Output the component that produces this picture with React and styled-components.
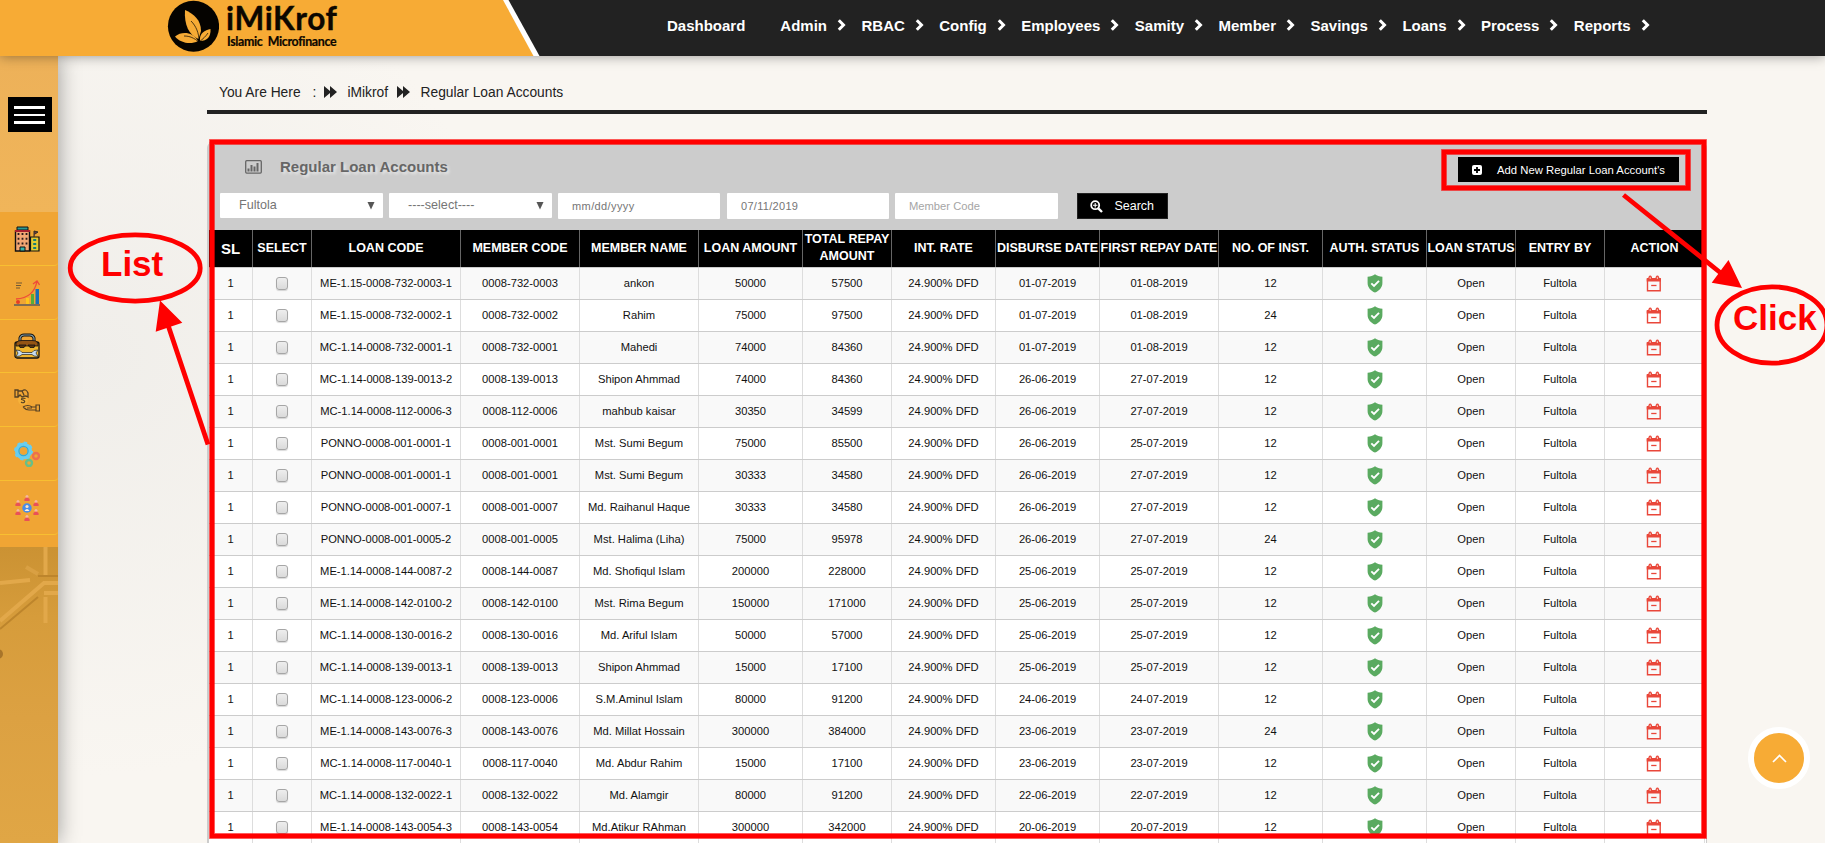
import React from "react";
import styled, { createGlobalStyle } from "styled-components";

const Global = createGlobalStyle`
  * { box-sizing: border-box; }
  html, body { margin: 0; padding: 0; }
  body {
    height: 843px;
    overflow: hidden;
    font-family: "Liberation Sans", Arial, sans-serif;
    color: #222;
    background: #f9f6f1;
  }
`;

const Page = styled.div`
  position: relative;
  width: 1825px;
  height: 843px;
  overflow: hidden;
  display: flex;
  flex-direction: column;
`;

const Header = styled.header`
  position: relative;
  z-index: 2;
  flex: none;
  height: 56px;
  display: flex;
  background: #222;
  box-shadow: 0 0 12px rgba(0, 0, 0, 0.4);
`;

const BrandEdge = styled.div`
  width: 540px;
  height: 56px;
  background: #fff;
  clip-path: polygon(0 0, 508.5px 0, 539.5px 100%, 0 100%);
`;

const Brand = styled.div`
  height: 56px;
  padding-left: 167px;
  display: flex;
  background: #f7ab35;
  clip-path: polygon(0 0, 503px 0, 533.5px 100%, 0 100%);
`;

const BrandText = styled.div`
  font-family: Lato, "Open Sans", sans-serif;
  font-weight: 700;
  color: #0c0700;
  padding-left: 7px;
  white-space: pre;
`;

const BrandName = styled.div`
  font-size: 31.5px;
  line-height: 34px;
  padding-top: 1px;
  letter-spacing: 0.65px;
  -webkit-text-stroke: 0.4px #0c0700;
`;

const BrandTag = styled.div`
  font-size: 12.4px;
  line-height: 14px;
  letter-spacing: -0.34px;
  padding-left: 1px;
  -webkit-text-stroke: 0.2px #0c0700;
`;

const Nav = styled.nav`
  display: flex;
  align-items: center;
  height: 50px;
  margin-left: 127px;
  color: #fff;
  font-size: 15px;
  font-weight: 700;
`;

const NavItem = styled.span`
  display: flex;
  align-items: center;
  margin-right: ${(p) => (p.$wide ? 35 : 15.45)}px;
  svg { margin-left: 10px; margin-top: -1px; }
`;

const Body = styled.div`
  display: flex;
  flex: 1;
  min-height: 0;
`;

const Sidebar = styled.aside`
  position: relative;
  z-index: 1;
  flex: none;
  width: 58px;
  display: flex;
  flex-direction: column;
  background: linear-gradient(#edb159, #f0b55a 160px);
  box-shadow: 0 0 22px rgba(0, 0, 0, 0.38);
`;

const MenuButton = styled.div`
  width: 44px;
  height: 35px;
  margin: 41px 0 80px 8px;
  padding: 9px 7px 8px 6px;
  display: flex;
  flex-direction: column;
  justify-content: space-between;
  background: #000;
`;

const MenuBar = styled.i`
  height: ${(p) => p.$h || 3}px;
  background: #fff;
`;

const ShortcutList = styled.div`
  height: 335px;
  background: #f0a534;
`;

const Shortcut = styled.div`
  height: ${(p) => p.$h || 54}px;
  padding: 0 4px 0 0;
  display: flex;
  align-items: center;
  justify-content: center;
  border-bottom: 1px solid #f8bf31;
  border-bottom-right-radius: 4px;
`;

const Texture = styled.div`
  flex: 1;
  background: linear-gradient(#cb9233, #d69c3b 70px, #dca142 170px, #e0a645);
`;

const Main = styled.main`
  flex: 1;
  padding: 21px 118px 0 149px;
  background: radial-gradient(ellipse 420px 420px at 40px 300px, #f0eeea, #f9f6f1);
`;

const Crumbs = styled.div`
  height: 37px;
  padding: 8px 0 0 12px;
  border-bottom: 4px solid #222;
  display: flex;
  font-size: 13.8px;
  line-height: 16px;
  color: #222;
`;

const Crumb = styled.span`
  white-space: pre;
  margin-right: ${(p) => p.$gap || 0}px;
`;

const CrumbIcon = styled.svg`
  margin: 1px 10.5px 0 0;
`;

const Panel = styled.section`
  width: 1500px;
  height: 720px;
  margin-top: 28px;
  border: solid #ccc;
  border-width: 0 1px 0 2px;
  border-radius: 6px 6px 0 0;
  background: #fff;
`;

const PanelTop = styled.div`
  height: 88px;
  background: #ccc;
`;

const TitleRow = styled.div`
  display: flex;
  height: 51px;
  padding: 15px 27px 0 36px;
`;

const Title = styled.h1`
  margin: 1px 0 0 18px;
  font-size: 15px;
  line-height: 17px;
  color: #666;
  text-shadow: 2px 2px 3px rgba(255, 255, 255, 0.6);
`;

const AddButton = styled.div`
  width: 221px;
  height: 25px;
  margin-left: auto;
  padding: 0 14px;
  display: flex;
  align-items: center;
  justify-content: space-between;
  background: #000;
  color: #fff;
  font-size: 11.3px;
  white-space: nowrap;
`;

const Filters = styled.div`
  display: flex;
  align-items: flex-start;
  padding-left: 11px;
`;

const Field = styled.div`
  width: ${(p) => p.$w}px;
  height: ${(p) => p.$h || 26}px;
  margin-right: ${(p) => p.$gap || 6}px;
  padding: 0 8px ${(p) => p.$pb || 0}px ${(p) => p.$pl || 14}px;
  display: flex;
  align-items: center;
  justify-content: space-between;
  border-radius: 1px;
  background: #fff;
  color: ${(p) => p.$color || "#757575"};
  font-size: ${(p) => p.$size || 11}px;
  letter-spacing: ${(p) => p.$ls || 0}px;
`;

const SearchButton = styled.div`
  width: 91px;
  height: 26px;
  margin-left: 13px;
  padding: 0 13px 0 12px;
  display: flex;
  align-items: center;
  justify-content: space-between;
  border: 1px solid #222;
  background: #000;
  color: #fff;
  font-size: 12.5px;
`;

const columns = "44px 59px 149px 119px 119px 104px 89px 104px 104px 119px 104px 104px 89px 89px 100px";

const HeadRow = styled.div`
  display: grid;
  grid-template-columns: ${columns};
  height: 37px;
  width: 1496px;
  background: #000;
  color: #fff;
  font-size: 12.5px;
  font-weight: 700;
`;

const HeadCell = styled.div`
  display: flex;
  align-items: center;
  justify-content: center;
  text-align: center;
  line-height: 17px;
  padding-bottom: ${(p) => (p.$big ? 0 : 1)}px;
  font-size: ${(p) => (p.$big ? "15px" : "inherit")};
  border-right: 1px solid #666;
  white-space: pre;
`;

const Row = styled.div`
  display: grid;
  grid-template-columns: ${columns};
  width: 1496px;
  height: 32px;
  border-top: 1px solid #ccc;
  background: ${(p) => (p.$odd ? "#f9f9f9" : "#fff")};
  font-size: 11.2px;
  color: #111;
`;

const Cell = styled.div`
  display: flex;
  align-items: center;
  justify-content: center;
  padding: 0 0 2px;
  border-right: 1px solid #ddd;
  white-space: nowrap;
`;

const Check = styled.i`
  width: 12px;
  height: 13px;
  border: 1px solid #a6a6a6;
  border-radius: 3px;
  background: linear-gradient(#eee, #dadada);
  box-shadow: 0 1px 1px rgba(0, 0, 0, 0.15);
  margin: 1px 1px 0 0;
`;

const TopButton = styled.div`
  position: absolute;
  left: 1748px;
  top: 727px;
  width: 62px;
  height: 62px;
  border: 6px solid #fff;
  border-radius: 50%;
  background: #f7ab35;
  display: flex;
  align-items: center;
  justify-content: center;
`;

const Annotations = styled.svg`
  position: absolute;
  left: 0;
  top: 0;
  z-index: 5;
  font-family: "Liberation Sans", Arial, sans-serif;
`;

const LeafLogo = () => (
  <svg width="52" height="56" viewBox="0 0 52 56">
    <ellipse cx="26.5" cy="26.3" rx="25.6" ry="25.5" fill="#050300" />
    <g fill="#f7ab35">
      <path d="M18 10 C27 14 34 20 34 31 L31.500 39 C22 35 17 25 18 10Z" />
      <path d="M8 36.500 C15 31 26 32 31 41 C24 45 13 43 8 36.500Z" />
      <path d="M33 41 C32 33 38 30 43.500 29 C44 37 40 41 33 41Z" />
    </g>
    <path d="M24 21 C29 26 32 33 32 41 M17 36 C23 36 27 38 32 42 C36 39 39 36 41 33" fill="none" stroke="#050300" strokeWidth="0.7" />
  </svg>
);

const NavChevron = () => (
  <svg width="9" height="12" viewBox="0 0 9 12">
    <path d="M1.800 1.200 L6.500 6 L1.800 10.800" fill="none" stroke="#fff" strokeWidth="3" />
  </svg>
);

const Forward = () => (
  <CrumbIcon width="13" height="12" viewBox="0 0 13 12">
    <path d="M0 0 L6 5 V0 L13 6 L6 12 V7 L0 12Z" fill="#222" />
  </CrumbIcon>
);

const Shield = () => (
  <svg width="16" height="19" viewBox="0 0 16 19" style={{ marginTop: 2 }}>
    <path d="M8 0.3 C10 2 12.500 2.500 15.400 2.700 V9 C15.400 13.500 12 17 8 18.600 C4 17 0.600 13.500 0.600 9 V2.700 C3.500 2.500 6 2 8 0.300Z" fill="#5aaa60" />
    <path d="M4.300 9.400 L7 12 L12 6.800" fill="none" stroke="#fff" strokeWidth="1.9" />
  </svg>
);

const Calendar = () => (
  <svg width="16" height="17" viewBox="0 0 16 17" style={{ marginTop: 1, marginRight: 1 }}>
    <path d="M1.500 4 H14.200 V15.800 H1.500Z" fill="none" stroke="#e9473a" strokeWidth="1.4" />
    <path d="M1.500 3 H14 Q15 3 15 4 V6.500 H.7 V4 Q.7 3 1.500 3Z" fill="#e9473a" />
    <path d="M3 4.500 V2.200 Q4.200 .1 5.400 2.200 V4.500Z M10.200 4.500 V2.200 Q11.400 .1 12.600 2.200 V4.500Z" fill="#f6b3a8" stroke="#e9473a" strokeWidth="1.2" />
    <path d="M5.200 10.500 H10.500" stroke="#e9473a" strokeWidth="1.3" />
  </svg>
);

const BuildingIcon = () => (
  <svg width="26" height="26" viewBox="0 0 26 26">
    <path d="M1.500 5 H15.500 V25 H1.500Z" fill="#f3a673" stroke="#111" strokeWidth="1.4" />
    <path d="M3 1 H14 V4 H3Z" fill="#2d9a94" stroke="#111" />
    <path d="M1 5 H16" stroke="#a81f2d" strokeWidth="2" />
    <path d="M4.500 7 V20 M8.500 7 V20 M12.500 7 V20" stroke="#2b1a1a" strokeWidth="1.8" strokeDasharray="2 2.800" />
    <path d="M6 21 H11 V25 H6Z" fill="#35b5ab" stroke="#111" />
    <path d="M16.500 11 H25 V25 H16.500Z" fill="#e3ca32" stroke="#111" strokeWidth="1.2" />
    <path d="M20.700 13 V23" stroke="#167c76" strokeWidth="3" strokeDasharray="2 2" />
    <path d="M20 11 V5 L24 6 L21 8" fill="#683248" stroke="#332" />
  </svg>
);

const GrowthIcon = () => (
  <svg width="26" height="26" viewBox="0 0 26 26">
    <path d="M0 25 H26" stroke="#435064" strokeWidth="1.3" />
    <path d="M2 3 H8 M2 5.500 H7 M2 8 H6" stroke="#705835" strokeWidth="1.2" />
    <path d="M12 24 V18 H15 V24Z" fill="#ffc51c" />
    <path d="M17 24 V14 H20 V24Z" fill="#56ad3a" />
    <path d="M21.500 24 V9 H25 V24Z" fill="#176eb7" />
    <circle cx="4" cy="22" r="2" fill="#e83b25" />
    <path d="M2 19 Q20 18 23 1 M19 4 L23 1 L25.500 5" fill="none" stroke="#ef4938" strokeWidth="1.3" />
  </svg>
);

const ToolIcon = () => (
  <svg width="26" height="26" viewBox="0 0 26 26">
    <rect x="1" y="9" width="24" height="16" rx="2" fill="#efb62e" stroke="#111" strokeWidth="1.3" />
    <path d="M6 10 V5 Q7 2 10 2 H16 Q19 2 20 5 V10" fill="none" stroke="#111" strokeWidth="3" />
    <path d="M6 10 V5 Q7 2 10 2 H16 Q19 2 20 5 V10" fill="none" stroke="#8099a3" strokeWidth="1.2" />
    <path d="M2 10 Q4 7 8 7.500 H18 Q22 7 24 10 V13 H2Z" fill="#945514" stroke="#111" strokeWidth="0.8" />
    <path d="M5 12 H12 L10 14.500 H6Z M14 12 H21 L20 14.500 H16Z" fill="#5b350e" stroke="#111" strokeWidth="0.8" />
    <path d="M2 17 L6 17.500 L8 19.500 H18 L20 17.500 L24 17 L22 20 L24 23.500 L20 23 L18 21.500 H8 L6 23 L2 23.500 L4 20Z" fill="#c6dcf0" stroke="#222" strokeWidth="0.7" />
  </svg>
);

const LoanIcon = () => (
  <svg width="26" height="26" viewBox="0 0 26 26">
    <circle cx="9" cy="13" r="5" fill="#f6b23b" />
    <path d="M1 3 H4 V10 H1Z M4 4 H8 Q12 1 14 6 V10 Q11 8 8 10 L6 8 L4 10 M8 4 L10 8" fill="none" stroke="#564124" strokeWidth="1.3" />
    <path d="M11.500 11.500 Q7 10.500 7.500 12.500 Q11.500 13.500 10.500 15 Q9 16.500 7 15" fill="none" stroke="#564124" strokeWidth="1.2" />
    <path d="M9 20 Q14 17 18 20 H22 V23 H15 Q12 23 9 20 M22 18 H25.500 V24 H22Z M13 21 H18" fill="none" stroke="#564124" strokeWidth="1.2" />
  </svg>
);

const GearsIcon = () => (
  <svg width="26" height="26" viewBox="0 0 26 26">
    <circle cx="9.500" cy="10" r="6.300" fill="none" stroke="#68cdef" strokeWidth="4.6" />
    <circle cx="9.500" cy="10" r="8.500" fill="none" stroke="#68cdef" strokeWidth="2" strokeDasharray="3.300 3.380" />
    <circle cx="9.500" cy="10" r="4.600" fill="none" stroke="#37a8d2" strokeWidth="1.2" />
    <circle cx="22" cy="15" r="3" fill="none" stroke="#ed704d" strokeWidth="2.4" />
    <circle cx="15" cy="22" r="3" fill="none" stroke="#69bf87" strokeWidth="2.4" />
  </svg>
);

const TeamIcon = () => (
  <svg width="26" height="26" viewBox="0 0 26 26">
    <circle cx="13" cy="13" r="4.700" fill="#4a8ce8" />
    <circle cx="13" cy="11.500" r="1.600" fill="#ffe3c0" />
    <path d="M10.500 16 Q13 12 15.500 16Z" fill="#fff0dd" />
    {[[13, 2], [4, 7], [22, 7], [4, 16], [22, 16], [13, 22]].map(([x, y]) => (
      <g key={x + "-" + y}>
        <circle cx={x} cy={y - 0.5} r="1.5" fill="#f7b7a0" />
        <path d={`M${x - 2.6} ${y + 4} V${y + 2} Q${x} ${y - 1} ${x + 2.6} ${y + 2} V${y + 4}Z`} fill="#e95157" />
      </g>
    ))}
  </svg>
);

const nav = ["Admin", "RBAC", "Config", "Employees", "Samity", "Member", "Savings", "Loans", "Process", "Reports"];

const heads = ["SL", "SELECT", "LOAN CODE", "MEMBER CODE", "MEMBER NAME", "LOAN AMOUNT", "TOTAL REPAY\nAMOUNT", "INT. RATE", "DISBURSE DATE", "FIRST REPAY DATE", "NO. OF INST.", "AUTH. STATUS", "LOAN STATUS", "ENTRY BY", "ACTION"];

const loans = [
  ["ME-1.15-0008-732-0003-1", "0008-732-0003", "ankon", "50000", "57500", "01-07-2019", "01-08-2019", "12"],
  ["ME-1.15-0008-732-0002-1", "0008-732-0002", "Rahim", "75000", "97500", "01-07-2019", "01-08-2019", "24"],
  ["MC-1.14-0008-732-0001-1", "0008-732-0001", "Mahedi", "74000", "84360", "01-07-2019", "01-08-2019", "12"],
  ["MC-1.14-0008-139-0013-2", "0008-139-0013", "Shipon Ahmmad", "74000", "84360", "26-06-2019", "27-07-2019", "12"],
  ["MC-1.14-0008-112-0006-3", "0008-112-0006", "mahbub kaisar", "30350", "34599", "26-06-2019", "27-07-2019", "12"],
  ["PONNO-0008-001-0001-1", "0008-001-0001", "Mst. Sumi Begum", "75000", "85500", "26-06-2019", "25-07-2019", "12"],
  ["PONNO-0008-001-0001-1", "0008-001-0001", "Mst. Sumi Begum", "30333", "34580", "26-06-2019", "27-07-2019", "12"],
  ["PONNO-0008-001-0007-1", "0008-001-0007", "Md. Raihanul Haque", "30333", "34580", "26-06-2019", "27-07-2019", "12"],
  ["PONNO-0008-001-0005-2", "0008-001-0005", "Mst. Halima (Liha)", "75000", "95978", "26-06-2019", "27-07-2019", "24"],
  ["ME-1.14-0008-144-0087-2", "0008-144-0087", "Md. Shofiqul Islam", "200000", "228000", "25-06-2019", "25-07-2019", "12"],
  ["ME-1.14-0008-142-0100-2", "0008-142-0100", "Mst. Rima Begum", "150000", "171000", "25-06-2019", "25-07-2019", "12"],
  ["MC-1.14-0008-130-0016-2", "0008-130-0016", "Md. Ariful Islam", "50000", "57000", "25-06-2019", "25-07-2019", "12"],
  ["MC-1.14-0008-139-0013-1", "0008-139-0013", "Shipon Ahmmad", "15000", "17100", "25-06-2019", "25-07-2019", "12"],
  ["MC-1.14-0008-123-0006-2", "0008-123-0006", "S.M.Aminul Islam", "80000", "91200", "24-06-2019", "24-07-2019", "12"],
  ["ME-1.14-0008-143-0076-3", "0008-143-0076", "Md. Millat Hossain", "300000", "384000", "23-06-2019", "23-07-2019", "24"],
  ["MC-1.14-0008-117-0040-1", "0008-117-0040", "Md. Abdur Rahim", "15000", "17100", "23-06-2019", "23-07-2019", "12"],
  ["MC-1.14-0008-132-0022-1", "0008-132-0022", "Md. Alamgir", "80000", "91200", "22-06-2019", "22-07-2019", "12"],
  ["ME-1.14-0008-143-0054-3", "0008-143-0054", "Md.Atikur RAhman", "300000", "342000", "20-06-2019", "20-07-2019", "12"],
];

const DownArrow = () => (
  <svg width="8" height="9" viewBox="0 0 8 9"><path d="M0.500 1 H7.500 L4 8.500Z" fill="#555" /></svg>
);

export default function App() {
  return (
    <Page>
      <Global />
      <Header>
        <BrandEdge>
          <Brand>
            <LeafLogo />
            <BrandText>
              <BrandName>iMiKrof</BrandName>
              <BrandTag>Islamic  Microfinance</BrandTag>
            </BrandText>
          </Brand>
        </BrandEdge>
        <Nav>
          <NavItem $wide>Dashboard</NavItem>
          {nav.map((n) => (
            <NavItem key={n}>{n}<NavChevron /></NavItem>
          ))}
        </Nav>
      </Header>
      <Body>
        <Sidebar>
          <MenuButton><MenuBar /><MenuBar $h={2} /><MenuBar /></MenuButton>
          <ShortcutList>
            <Shortcut><BuildingIcon /></Shortcut>
            <Shortcut><GrowthIcon /></Shortcut>
            <Shortcut $h={53}><ToolIcon /></Shortcut>
            <Shortcut><LoanIcon /></Shortcut>
            <Shortcut><GearsIcon /></Shortcut>
            <Shortcut><TeamIcon /></Shortcut>
          </ShortcutList>
          <Texture>
            <svg width="58" height="130" viewBox="0 0 58 130">
              <g fill="none" stroke="#e2a84a" strokeWidth="4">
                <path d="M45.500 0 V28 M45.500 50 V76 M0 36 L30 33 M0 74 L44 36 L58 36 M44 46 H58" />
                <path d="M26 20 L38 27" stroke="#d9a043" />
                <path d="M38 29 H58 M0 82 L38 50" stroke="#bd852c" strokeWidth="2" />
              </g>
              <circle cx="-2" cy="107" r="5" fill="#a8752a" />
            </svg>
          </Texture>
        </Sidebar>
        <Main>
          <Crumbs>
            <Crumb $gap={12}>You Are Here</Crumb>
            <Crumb $gap={7.5}>:</Crumb>
            <Forward />
            <Crumb $gap={9}>iMikrof</Crumb>
            <Forward />
            <Crumb>Regular Loan Accounts</Crumb>
          </Crumbs>
          <Panel>
            <PanelTop>
              <TitleRow>
                <svg width="17" height="14" viewBox="0 0 17 14" style={{ marginTop: 3 }}>
                  <rect x="0.7" y="0.7" width="15.6" height="12.4" rx="1" fill="none" stroke="#666" strokeWidth="1.3" />
                  <path d="M3.500 11.500 V8.500 M6.500 11.500 V5 M9.500 11.500 V6.500 M12.500 11.500 V3" stroke="#666" strokeWidth="2" />
                </svg>
                <Title>Regular Loan Accounts</Title>
                <AddButton>
                  <svg width="10" height="10" viewBox="0 0 10 10">
                    <rect width="10" height="10" rx="2" fill="#fff" />
                    <path d="M5 2 V8 M2 5 H8" stroke="#000" strokeWidth="1.8" />
                  </svg>
                  Add New Regular Loan Account's
                </AddButton>
              </TitleRow>
              <Filters>
                <Field $w={163} $h={25} $pl={19} $pb={1} $size={12.6}>Fultola<DownArrow /></Field>
                <Field $w={163} $h={25} $pl={19} $pb={1} $size={12.6}>----select----<DownArrow /></Field>
                <Field $w={162} $gap={7} $pb={1} $ls={0.4}>mm/dd/yyyy</Field>
                <Field $w={162} $pb={1} $ls={0.3}>07/11/2019</Field>
                <Field $w={163} $color="#a5a5a5" $size={11.2}>Member Code</Field>
                <SearchButton>
                  <svg width="13" height="13" viewBox="0 0 13 13">
                    <circle cx="5.2" cy="5.2" r="4" fill="none" stroke="#fff" strokeWidth="1.8" />
                    <path d="M8.300 8.300 L12 12" stroke="#fff" strokeWidth="2.4" />
                    <path d="M5.200 3 V7.400 M3 5.200 H7.400" stroke="#fff" strokeWidth="1.1" />
                  </svg>
                  Search
                </SearchButton>
              </Filters>
            </PanelTop>
            <HeadRow>
              {heads.map((h, i) => <HeadCell key={h} $big={i === 0}>{h}</HeadCell>)}
            </HeadRow>
            {loans.map((l, i) => (
              <Row key={i} $odd={i % 2 === 0}>
                <Cell>1</Cell>
                <Cell><Check /></Cell>
                {l.slice(0, 5).map((v, j) => <Cell key={j}>{v}</Cell>)}
                <Cell>24.900% DFD</Cell>
                {l.slice(5).map((v, j) => <Cell key={j}>{v}</Cell>)}
                <Cell><Shield /></Cell>
                <Cell>Open</Cell>
                <Cell>Fultola</Cell>
                <Cell><Calendar /></Cell>
              </Row>
            ))}
          </Panel>
        </Main>
      </Body>
      <TopButton>
        <svg width="15" height="9" viewBox="0 0 15 9">
          <path d="M1 8 L7.500 1.500 L14 8" fill="none" stroke="#fff" strokeWidth="1.7" />
        </svg>
      </TopButton>
      <Annotations width="1825" height="843" viewBox="0 0 1825 843">
        <g fill="none" stroke="#f00" strokeWidth="6" strokeOpacity="0.55">
          <rect x="212" y="142" width="1492" height="694" />
          <rect x="1444" y="152" width="244" height="36" />
        </g>
        <g fill="none" stroke="#f00">
          <rect x="212" y="142" width="1492" height="694" strokeWidth="4.4" />
          <rect x="1444" y="152" width="244" height="36" strokeWidth="4.4" />
          <ellipse cx="135.2" cy="268" rx="65" ry="33.2" strokeWidth="4.8" />
          <ellipse cx="1772" cy="325" rx="55" ry="38.2" strokeWidth="4.8" />
          <path d="M208 444.500 L168 325 M1623.500 195 L1722 274" strokeWidth="4.8" />
        </g>
        <g fill="#f00">
          <path d="M160 300.500 L182.300 322.700 L155.700 331.700Z M1742 288 L1728.500 260 L1711.700 282.700Z" />
          <text x="101" y="275.700" fontSize="35" fontWeight="700">List</text>
          <text x="1733" y="329.700" fontSize="35" fontWeight="700">Click</text>
        </g>
      </Annotations>
    </Page>
  );
}
